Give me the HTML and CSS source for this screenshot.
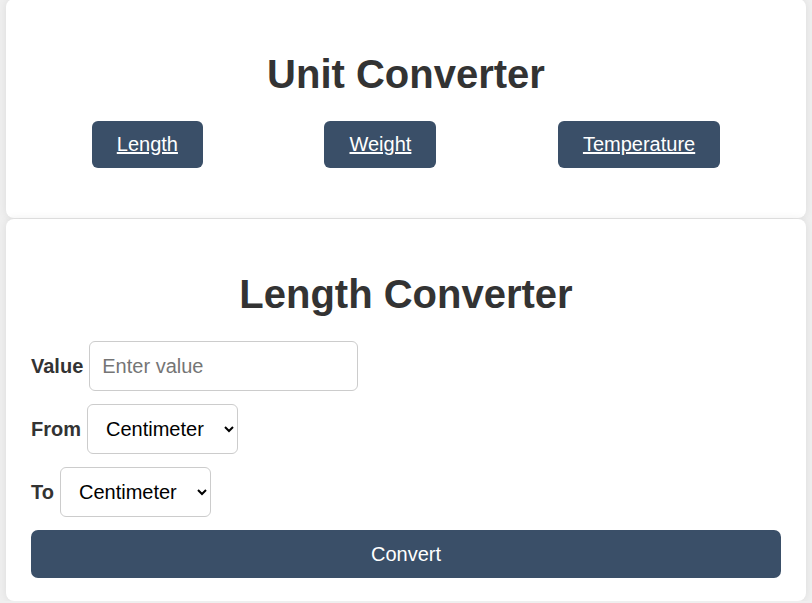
FILE: index.html
```html
<!DOCTYPE html>
<html lang="en">
<head>
<meta charset="utf-8">
<title>Unit Converter</title>
<link rel="stylesheet" href="styles.css">
</head>
<body>
<div class="page">
  <div class="card card-top">
    <h1 class="title">Unit Converter</h1>
    <nav class="tabs">
      <a href="#" class="tab">Length</a>
      <a href="#" class="tab">Weight</a>
      <a href="#" class="tab">Temperature</a>
    </nav>
  </div>
  <div class="card card-main">
    <h1 class="title">Length Converter</h1>
    <form class="form">
      <div class="row">
        <label class="label" for="value">Value</label>
        <input class="field input" id="value" type="text" placeholder="Enter value">
      </div>
      <div class="row">
        <label class="label" for="from">From</label>
        <select class="field select" id="from">
          <option>Centimeter</option>
          <option>Meter</option>
          <option>Kilometer</option>
          <option>Inch</option>
          <option>Foot</option>
        </select>
      </div>
      <div class="row">
        <label class="label" for="to">To</label>
        <select class="field select" id="to">
          <option>Centimeter</option>
          <option>Meter</option>
          <option>Kilometer</option>
          <option>Inch</option>
          <option>Foot</option>
        </select>
      </div>
      <button type="button" class="convert">Convert</button>
    </form>
  </div>
</div>
</body>
</html>
```

FILE: styles.css
```css
* { box-sizing: border-box; }

html, body {
  margin: 0;
  padding: 0;
  background: #efefef;
  font-family: "Liberation Sans", Arial, sans-serif;
  color: #333333;
}

.page {
  width: 800px;
  margin: -1px auto 0;
  display: flex;
  flex-direction: column;
  gap: 1px;
}

.card {
  background: #ffffff;
  border-radius: 8px;
  box-shadow: 0 0 8px rgba(0, 0, 0, 0.08);
  padding: 25px;
}

.card-main {
  padding-bottom: 23px;
}

.title {
  font-size: 40px;
  font-weight: bold;
  line-height: 46px;
  text-align: center;
  margin: 27px 0 24px;
  color: #333333;
}

.tabs {
  display: flex;
  justify-content: space-around;
  margin-bottom: 25px;
}

.tab {
  display: block;
  background: #3a4f68;
  color: #ffffff;
  font-size: 20px;
  line-height: 23px;
  padding: 12px 25px;
  border-radius: 6px;
  text-decoration: underline;
}

.form {
  display: flex;
  flex-direction: column;
  gap: 13px;
}

.row {
  display: flex;
  align-items: center;
  gap: 6px;
  height: 50px;
}

.label {
  font-size: 20px;
  font-weight: bold;
  color: #333333;
}

.field {
  height: 50px;
  font-family: "Liberation Sans", Arial, sans-serif;
  font-size: 20px;
  border: 1px solid #cccccc;
  border-radius: 6px;
  background: #ffffff;
  color: #000000;
}

.input {
  width: 269px;
  padding: 12px;
}

.input::placeholder {
  color: #757575;
}

.select {
  width: 151px;
  padding: 0 10px 0 14px;
}

.convert {
  height: 48px;
  width: 100%;
  border: none;
  border-radius: 7px;
  background: #3a4f68;
  color: #ffffff;
  font-family: "Liberation Sans", Arial, sans-serif;
  font-size: 20px;
}
```
